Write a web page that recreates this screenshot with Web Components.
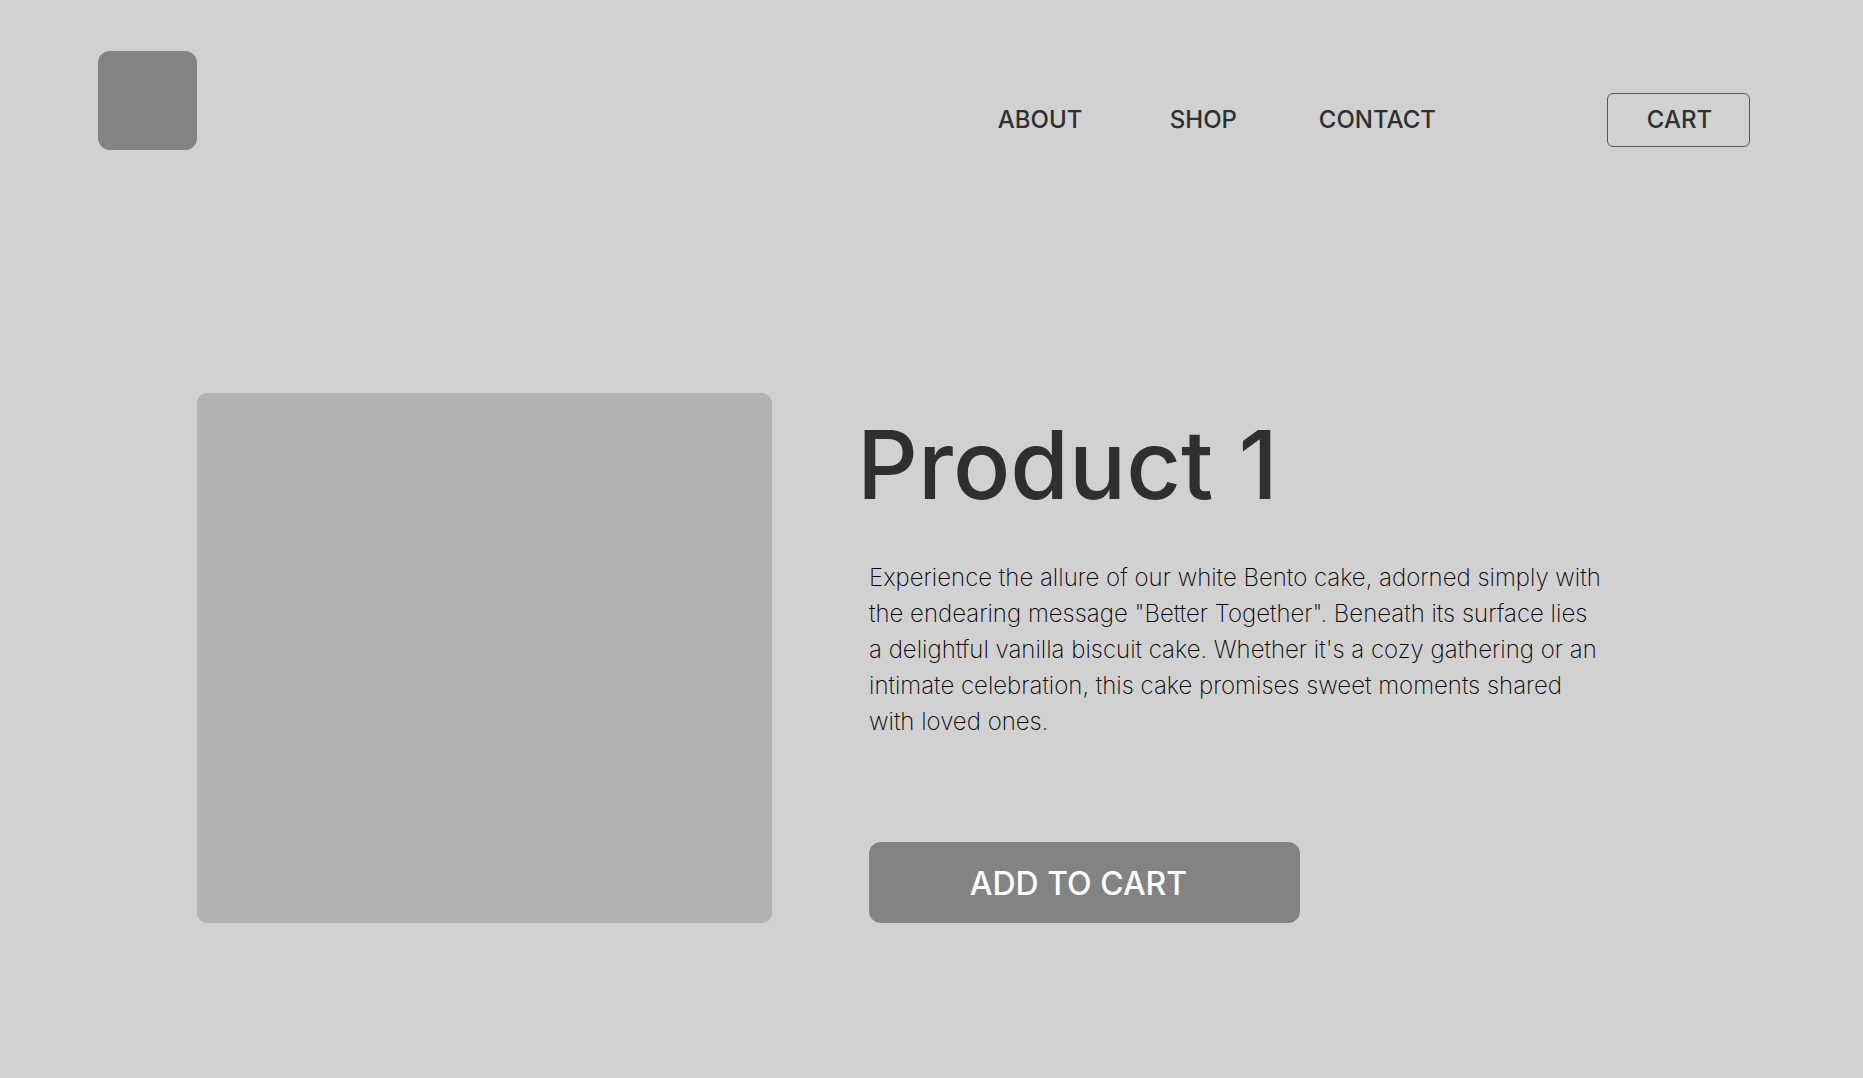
<!DOCTYPE html>
<html lang="en">
<head>
<meta charset="utf-8">
<meta name="viewport" content="width=device-width, initial-scale=1">
<title>Product 1</title>
<style>
  body { margin: 0; min-height: 100vh; background: #d1d1d1; color: #2f2f2f; font-family: Inter, "Liberation Sans", sans-serif; }
</style>
</head>
<body>
<site-header>
  <nav-link href="#about">ABOUT</nav-link>
  <nav-link href="#shop">SHOP</nav-link>
  <nav-link href="#contact">CONTACT</nav-link>
  <cart-button slot="action">CART</cart-button>
</site-header>
<product-detail>
  <span slot="title">Product 1</span>
  <span slot="description">Experience the allure of our white Bento cake, adorned simply with the endearing message "Better Together". Beneath its surface lies a delightful vanilla biscuit cake. Whether it's a cozy gathering or an intimate celebration, this cake promises sweet moments shared with loved ones.</span>
  <add-button slot="action">ADD TO CART</add-button>
</product-detail>

<script>
class BaseElement extends HTMLElement {
  constructor() {
    super();
    this.attachShadow({ mode: "open" }).innerHTML = this.constructor.markup;
  }
}

customElements.define("nav-link", class extends BaseElement {
  static markup = `
    <style>
      :host { display: block; }
      a { color: inherit; text-decoration: none; font-size: 24px; line-height: 54px; font-weight: 500; }
    </style>
    <a><slot></slot></a>`;
  connectedCallback() {
    this.shadowRoot.querySelector("a").href = this.getAttribute("href");
  }
});

customElements.define("cart-button", class extends BaseElement {
  static markup = `
    <style>
      :host { display: block; }
      button { box-sizing: border-box; width: 143px; height: 54px; padding: 0 0 0 2px; border: 1px solid #5a5a5a; border-radius: 6px;
        background: none; color: inherit; font: 500 24px/52px Inter, "Liberation Sans", sans-serif; cursor: pointer; }
    </style>
    <button type="button"><slot></slot></button>`;
});

customElements.define("add-button", class extends BaseElement {
  static markup = `
    <style>
      :host { display: block; }
      button { display: block; box-sizing: border-box; width: 431px; max-width: 100%; height: 81px; padding: 2px 12px 0 0; border: 0; border-radius: 12px;
        background: #838383; color: #fff; font: 500 32px/39px Inter, "Liberation Sans", sans-serif; cursor: pointer; }
    </style>
    <button type="button"><slot></slot></button>`;
});

customElements.define("site-header", class extends BaseElement {
  static markup = `
    <style>
      :host { display: block; }
      header { display: flex; align-items: flex-end; justify-content: space-between; padding: 51px 113px 0 98px; }
      .logo { display: block; width: 99px; height: 99px; border-radius: 12px; background: #838383; }
      .menu { display: flex; align-items: center; gap: 171px; padding-bottom: 3px; }
      nav { display: grid; grid-template-columns: 172px 149px auto; }
    </style>
    <header>
      <a class="logo" href="#" aria-label="Home"></a>
      <div class="menu">
        <nav><slot></slot></nav>
        <slot name="action"></slot>
      </div>
    </header>`;
});

customElements.define("product-detail", class extends BaseElement {
  static markup = `
    <style>
      :host { display: block; }
      main { display: flex; gap: 97px; padding: 243px 113px 98px 197px; }
      .photo { flex: 0 1 575px; min-height: 530px; border-radius: 10px; background: #b2b2b2; }
      .info { flex: 1 1 0; padding-top: 14px; }
      h1 { margin: 0 0 37px -12px; font-size: 95px; line-height: 116px; font-weight: 500; }
      p { margin: 0 0 102px; max-width: 735px; color: #000; font-size: 24px; line-height: 36px; font-weight: 200; }
    </style>
    <main>
      <div class="photo" role="img" aria-label="Product photo"></div>
      <section class="info">
        <h1><slot name="title"></slot></h1>
        <p><slot name="description"></slot></p>
        <slot name="action"></slot>
      </section>
    </main>`;
});
</script>
</body>
</html>
